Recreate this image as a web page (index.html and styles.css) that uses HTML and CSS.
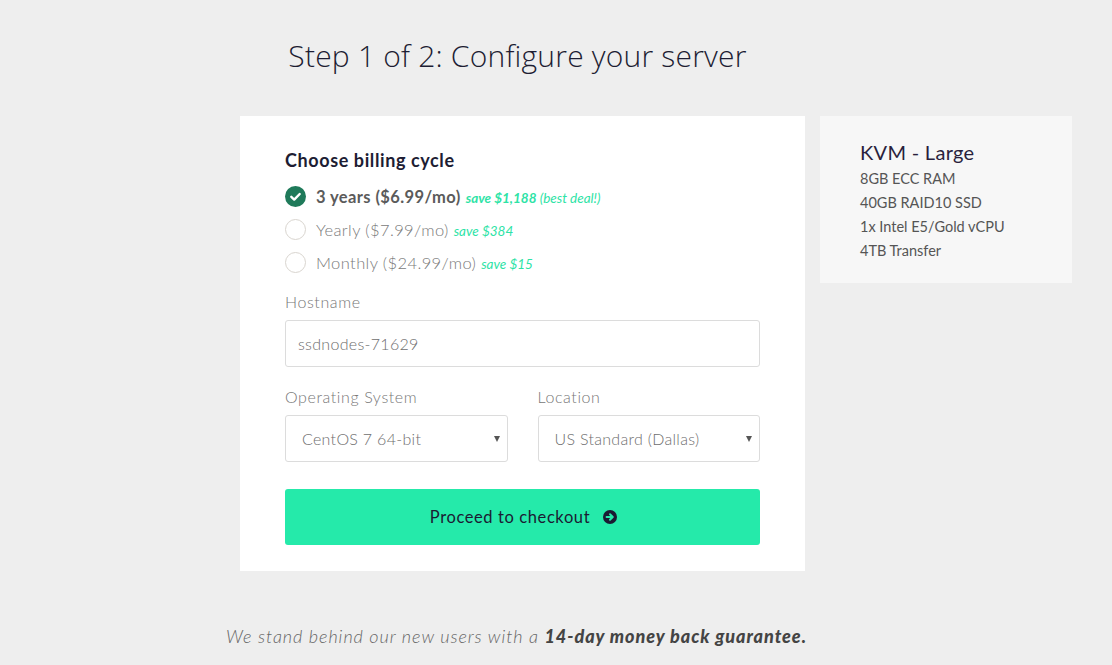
FILE: index.html
```html
<!DOCTYPE html>
<html lang="en">
<head>
<meta charset="utf-8">
<title>Configure your server</title>
<link rel="stylesheet" href="styles.css">
</head>
<body>
<div class="layout">
  <h1 class="title">Step 1 of 2: Configure your server</h1>

  <form class="card">
    <h2 class="card-title">Choose billing cycle</h2>
    <div class="cycles">
      <label class="cycle checked">
        <span class="radio"><svg viewBox="0 0 21 21" width="21" height="21"><circle cx="10.5" cy="10.5" r="10.5" fill="#1f7a5a"/><path d="M6.3 10.8 L9.2 13.6 L14.7 8" fill="none" stroke="#fff" stroke-width="2.4" stroke-linecap="round" stroke-linejoin="round"/></svg></span>
        <span class="cycle-text strong">3 years ($6.99/mo)</span>
        <span class="save"><b>save $1,188</b> (best deal!)</span>
      </label>
      <label class="cycle">
        <span class="radio"></span>
        <span class="cycle-text">Yearly ($7.99/mo)</span>
        <span class="save">save $384</span>
      </label>
      <label class="cycle">
        <span class="radio"></span>
        <span class="cycle-text">Monthly ($24.99/mo)</span>
        <span class="save">save $15</span>
      </label>
    </div>

    <label class="field-label">Hostname</label>
    <div class="input">ssdnodes-71629</div>

    <div class="two-col">
      <div class="col">
        <label class="field-label">Operating System</label>
        <div class="select">CentOS 7 64-bit</div>
      </div>
      <div class="col">
        <label class="field-label">Location</label>
        <div class="select">US Standard (Dallas)</div>
      </div>
    </div>

    <button type="button" class="btn">Proceed to checkout
      <svg viewBox="0 0 14 14" width="14" height="14"><circle cx="7" cy="7" r="7" fill="#1b1b33"/><path d="M3.6 7 H9.6 M7 4.3 L9.8 7 L7 9.7" fill="none" stroke="#25eaaa" stroke-width="2" stroke-linecap="round" stroke-linejoin="round"/></svg>
    </button>
  </form>

  <aside class="plan">
    <h3 class="plan-name">KVM - Large</h3>
    <p class="plan-line">8GB ECC RAM</p>
    <p class="plan-line">40GB RAID10 SSD</p>
    <p class="plan-line">1x Intel E5/Gold vCPU</p>
    <p class="plan-line">4TB Transfer</p>
  </aside>

  <p class="guarantee">We stand behind our new users with a <b>14-day money back guarantee.</b></p>
</div>
</body>
</html>
```

FILE: styles.css
```css
* { box-sizing: border-box; }

body {
  margin: 0;
  background: #eeeeee;
  font-family: "Lato", "Noto Sans", sans-serif;
  color: #777;
}

.layout {
  display: grid;
  grid-template-columns: 565px 252px;
  column-gap: 15px;
  margin-left: 240px;
  align-items: start;
}

.title {
  grid-column: 1;
  grid-row: 1;
  margin: 0;
  padding: 36px 10px 0 0;
  height: 116px;
  text-align: center;
  font-family: "Open Sans", "Noto Sans", sans-serif;
  font-weight: 300;
  font-size: 30px;
  line-height: 40px;
  color: #1d1d33;
  letter-spacing: 0.2px;
}

.card {
  grid-column: 1;
  grid-row: 2;
  background: #fff;
  padding: 32px 45px 26px;
}

.card-title {
  margin: 0;
  font-size: 18px;
  line-height: 24px;
  font-weight: 700;
  color: #1d1d33;
  letter-spacing: 0.6px;
}

.cycles {
  margin-top: 8px;
  display: flex;
  flex-direction: column;
}

.cycle {
  height: 33px;
  display: flex;
  align-items: center;
}

.radio {
  width: 21px;
  height: 21px;
  border-radius: 50%;
  border: 1px solid #d9d5cf;
  flex: none;
  display: flex;
}

.checked .radio { border: none; }

.cycle-text {
  margin-left: 10px;
  font-size: 16.5px;
  color: #7a7a7a;
  font-weight: 300;
  letter-spacing: 0.4px;
}

.cycle-text.strong {
  font-weight: 700;
  color: #5b5b5b;
}

.save {
  margin-left: 5px;
  margin-top: 2px;
  font-size: 13.5px;
  font-style: italic;
  color: #2ee3a6;
  font-weight: 400;
}

.save b { font-weight: 700; }

.field-label {
  display: block;
  margin-top: 12px;
  font-size: 16px;
  line-height: 22px;
  font-weight: 300;
  color: #777;
  letter-spacing: 0.6px;
}

.input,
.select {
  margin-top: 7px;
  height: 47px;
  border: 1px solid #dcdcdc;
  border-radius: 3px;
  display: flex;
  align-items: center;
  font-size: 16px;
  font-weight: 300;
  color: #6e6e6e;
  letter-spacing: 0.3px;
}

.input { padding-left: 12px; }

.select {
  position: relative;
  padding-left: 16px;
}

.select::after {
  content: "";
  position: absolute;
  right: 7px;
  top: 20px;
  border-left: 3px solid transparent;
  border-right: 3px solid transparent;
  border-top: 6px solid #555;
}

.two-col {
  display: grid;
  grid-template-columns: 1fr 1fr;
  column-gap: 30px;
  margin-top: 7px;
}

.btn {
  margin-top: 27px;
  width: 100%;
  height: 56px;
  border: none;
  border-radius: 3px;
  background: #25eaaa;
  display: flex;
  align-items: center;
  justify-content: center;
  gap: 13px;
  font-family: "Lato", "Noto Sans", sans-serif;
  font-size: 16.5px;
  font-weight: 400;
  letter-spacing: 0.6px;
  color: #1b1b33;
  padding: 0 0 0 2px;
}

.plan {
  grid-column: 2;
  grid-row: 2;
  background: #f7f7f7;
  padding: 23px 20px 20px 40px;
}

.plan-name {
  margin: 0 0 2px;
  font-size: 20px;
  line-height: 26px;
  font-weight: 400;
  color: #2a1f3d;
  letter-spacing: 0.3px;
}

.plan-line {
  margin: 0;
  font-size: 14.5px;
  line-height: 24px;
  font-weight: 400;
  color: #555;
}

.guarantee {
  grid-column: 1;
  grid-row: 3;
  margin: 53px -56px 0 -68px;
  text-align: center;
  font-size: 18px;
  line-height: 24px;
  font-style: italic;
  font-weight: 300;
  color: #666;
  letter-spacing: 0.95px;
}

.guarantee b {
  font-weight: 900;
  color: #444;
}
```
